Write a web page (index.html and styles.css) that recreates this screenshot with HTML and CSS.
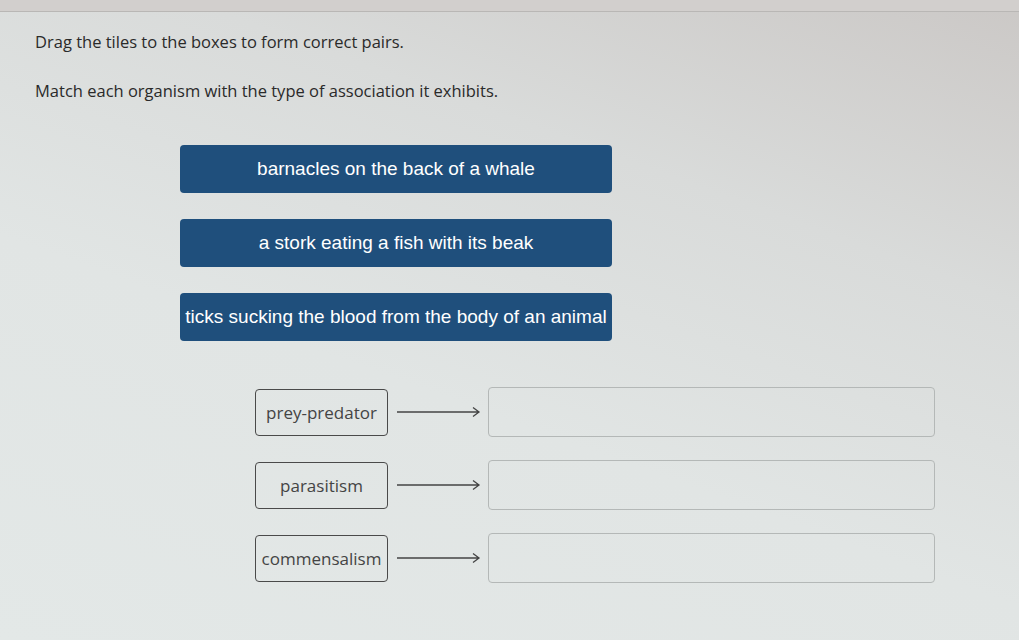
FILE: index.html
```html
<!DOCTYPE html>
<html lang="en">
<head>
    <meta charset="UTF-8">
    <meta name="viewport" content="width=device-width, initial-scale=1.0">
    <title>Match the Pairs</title>
    <link rel="stylesheet" href="styles.css">
</head>
<body>
    <div class="top-bar"></div>

    <div class="question">
        <p class="prompt">Drag the tiles to the boxes to form correct pairs.</p>
        <p class="prompt">Match each organism with the type of association it exhibits.</p>

        <div class="tiles">
            <div class="tile">barnacles on the back of a whale</div>
            <div class="tile">a stork eating a fish with its beak</div>
            <div class="tile">ticks sucking the blood from the body of an animal</div>
        </div>

        <div class="pairs">
            <div class="pair">
                <div class="label">prey-predator</div>
                <svg class="arrow" width="88" height="12" viewBox="0 0 88 12">
                    <path d="M2 6H84M78 1.5L84 6L78 10.5" />
                </svg>
                <div class="drop"></div>
            </div>
            <div class="pair">
                <div class="label">parasitism</div>
                <svg class="arrow" width="88" height="12" viewBox="0 0 88 12">
                    <path d="M2 6H84M78 1.5L84 6L78 10.5" />
                </svg>
                <div class="drop"></div>
            </div>
            <div class="pair">
                <div class="label">commensalism</div>
                <svg class="arrow" width="88" height="12" viewBox="0 0 88 12">
                    <path d="M2 6H84M78 1.5L84 6L78 10.5" />
                </svg>
                <div class="drop"></div>
            </div>
        </div>
    </div>
</body>
</html>
```

FILE: styles.css
```css
* {
    box-sizing: border-box;
}

body {
    margin: 0;
    height: 640px;
    overflow: hidden;
    background: linear-gradient(200deg, #cbc8c6 0%, #d9dbda 30%, #e1e5e4 60%, #e3e8e7 100%);
    font-family: "Open Sans", sans-serif;
    color: #2a2a2a;
}

.top-bar {
    height: 12px;
    border-bottom: 1px solid #b9b7b5;
    background-color: #d2cfcd;
}

.question {
    padding: 19px 0 0 35px;
}

.prompt {
    margin: 0 0 27px;
    font-size: 16.5px;
    line-height: 22px;
}

.tiles {
    display: flex;
    flex-direction: column;
    gap: 26px;
    margin: 43px 0 0 145px;
    width: 432px;
}

.tile {
    height: 48px;
    display: flex;
    align-items: center;
    justify-content: center;
    background-color: #1f4f7c;
    border-radius: 4px;
    color: #fff;
    font-family: "Liberation Sans", Arial, sans-serif;
    font-size: 19px;
    white-space: nowrap;
}

.pairs {
    display: flex;
    flex-direction: column;
    gap: 23px;
    margin: 46px 0 0 220px;
}

.pair {
    display: flex;
    align-items: center;
}

.label {
    width: 133px;
    height: 47px;
    display: flex;
    align-items: center;
    justify-content: center;
    border: 1.5px solid #4a4a4a;
    border-radius: 4px;
    font-size: 17px;
    color: #444;
}

.arrow {
    margin: 0 0 0 7px;
}

.arrow path {
    fill: none;
    stroke: #444;
    stroke-width: 1.3;
}

.drop {
    width: 447px;
    height: 50px;
    margin-left: 5px;
    border: 1px solid #b4b8b7;
    border-radius: 4px;
}
```
